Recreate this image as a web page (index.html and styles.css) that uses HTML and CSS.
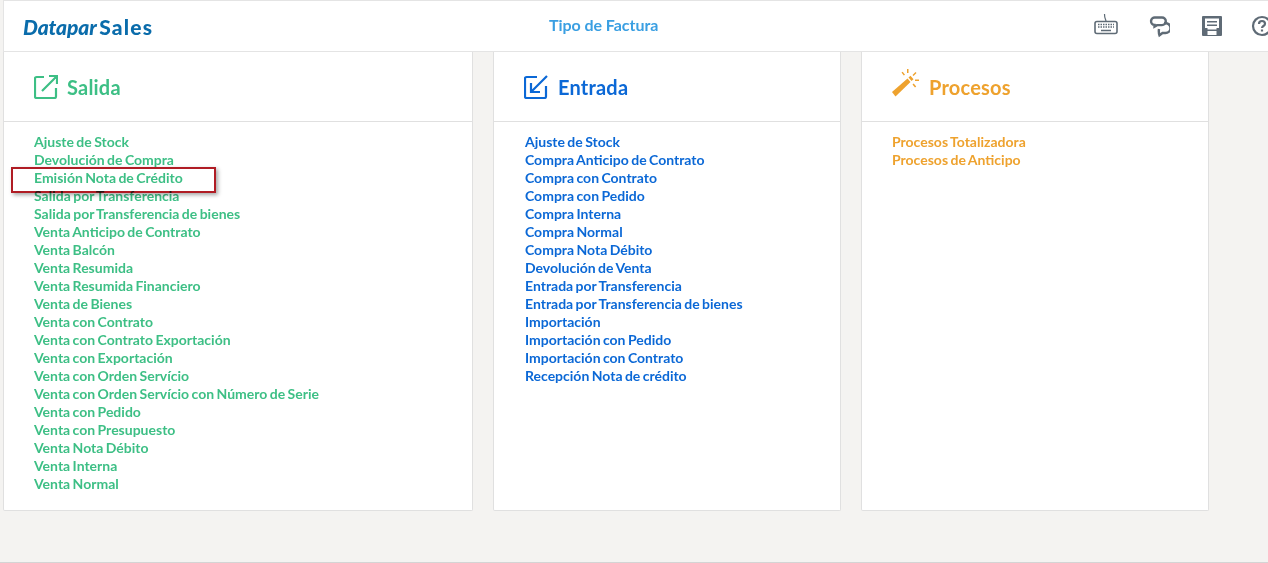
FILE: index.html
```html
<!DOCTYPE html>
<html>
<head>
    <title>Tipo de Factura</title>
    <link rel="stylesheet" href="styles.css">
</head>
<body>
    <div class="topbar">
        <div class="logo"><em>Datapar</em> <span>Sales</span></div>
        <div class="page-title">Tipo de Factura</div>
        <div class="tools">
            <svg class="tool" width="24" height="24" viewBox="0 0 24 24" fill="none" stroke="#5f6b76">
                <path d="M12 7.500C12 5 10.500 5 10.500 0" stroke-width="1.200"/>
                <rect x="1" y="7.500" width="22" height="12" rx="2" stroke-width="1.600"/>
                <path d="M4 10.500h16M4 13h16" stroke-width="1.500" stroke-dasharray="1.500 1"/>
                <path d="M7 16.500h10" stroke-width="1.500"/>
            </svg>
            <svg class="tool" width="24" height="24" viewBox="-2 0 24 24" fill="none" stroke="#5f6b76" stroke-width="2.400">
                <path d="M7 3.500h7a3.800 3.800 0 0 1 0 7.600H9l-2.500 1.500v-1.700A3.700 3.700 0 0 1 7 3.500z"/>
                <path d="M16 9c4 0 6.500 2 6.500 5s-2.500 5-5 5h-3l-3 2.300c-.5-1.500-1-3.500-.5-6.300"/>
            </svg>
            <svg class="tool" width="24" height="24" viewBox="-2 0 24 24">
                <rect fill="#5f6b76" x="2" y="2" width="20" height="20" rx="1"/>
                <path fill="#fff" d="M5 4.500h14V14h-2.500v7h-9v-7H5z"/>
                <path fill="#5f6b76" d="M7 7h10v1.500H7zM7 10.500h10V12H7zM5 15.500h14V17H5z"/>
            </svg>
            <svg class="tool" width="24" height="24" viewBox="0 0 24 24" fill="none" stroke="#5f6b76" stroke-width="2.200">
                <circle cx="12" cy="12" r="9"/>
                <path d="M9 10c0-2 1.300-3 3-3s3 1 3 2.700c0 2.300-3 2.300-3 4.300"/>
                <path d="M12 15.500v2"/>
            </svg>
        </div>
    </div>

    <div class="panels">
        <div class="panel salida">
            <div class="panel-head">
                <svg width="24" height="24" viewBox="0 0 24 24" fill="none" stroke="currentColor" stroke-width="2.200">
                    <path d="M10 2H2.500A1.500 1.500 0 0 0 1 3.500v18A1.500 1.500 0 0 0 2.500 23h18a1.500 1.500 0 0 0 1.500-1.500V13"/>
                    <path d="M8 16L23 1M15 1h8v8"/>
                </svg>
                <h2>Salida</h2>
            </div>
            <ul class="links">
                <li>Ajuste de Stock</li>
                <li>Devolución de Compra</li>
                <li>Emisión Nota de Crédito</li>
                <li>Salida por Transferencia</li>
                <li>Salida por Transferencia de bienes</li>
                <li>Venta Anticipo de Contrato</li>
                <li>Venta Balcón</li>
                <li>Venta Resumida</li>
                <li>Venta Resumida Financiero</li>
                <li>Venta de Bienes</li>
                <li>Venta con Contrato</li>
                <li>Venta con Contrato Exportación</li>
                <li>Venta con Exportación</li>
                <li>Venta con Orden Servício</li>
                <li>Venta con Orden Servício con Número de Serie</li>
                <li>Venta con Pedido</li>
                <li>Venta con Presupuesto</li>
                <li>Venta Nota Débito</li>
                <li>Venta Interna</li>
                <li>Venta Normal</li>
            </ul>
            <div class="highlight"></div>
        </div>

        <div class="panel entrada">
            <div class="panel-head">
                <svg width="24" height="24" viewBox="0 0 24 24" fill="none" stroke="currentColor" stroke-width="2.200">
                    <path d="M13 2H2.500A1.500 1.500 0 0 0 1 3.500v18A1.500 1.500 0 0 0 2.500 23h18a1.500 1.500 0 0 0 1.500-1.500V11"/>
                    <path d="M23 1L8 16M7 8v9h9"/>
                </svg>
                <h2>Entrada</h2>
            </div>
            <ul class="links">
                <li>Ajuste de Stock</li>
                <li>Compra Anticipo de Contrato</li>
                <li>Compra con Contrato</li>
                <li>Compra con Pedido</li>
                <li>Compra Interna</li>
                <li>Compra Normal</li>
                <li>Compra Nota Débito</li>
                <li>Devolución de Venta</li>
                <li>Entrada por Transferencia</li>
                <li>Entrada por Transferencia de bienes</li>
                <li>Importación</li>
                <li>Importación con Pedido</li>
                <li>Importación con Contrato</li>
                <li>Recepción Nota de crédito</li>
            </ul>
        </div>

        <div class="panel procesos">
            <div class="panel-head">
                <svg class="wand" width="27" height="28" viewBox="0 0 27 28" fill="currentColor">
                    <path d="M0 23L15.500 9.500l3 3.500L3.500 27.500z"/>
                    <path d="M16.500 8.500l2-1.800 3 3.500-2 1.800z"/>
                    <path d="M15 0h1.500v4H15zM9.500 3.500l1.200-.8 2.300 3-1.200.8zM23.500 3l1 1-3 3-1-1zM23 10.500h4V12h-4zM20.500 15.500l1.200-1 2.500 3-1.200 1z"/>
                </svg>
                <h2>Procesos</h2>
            </div>
            <ul class="links">
                <li>Procesos Totalizadora</li>
                <li>Procesos de Anticipo</li>
            </ul>
        </div>
    </div>
</body>
</html>
```

FILE: styles.css
```css
* {
    box-sizing: border-box;
}
html, body {
    height: 100%;
}
body {
    margin: 0;
    padding: 0 0 0 3px;
    overflow: hidden;
    background-color: #f4f3f1;
    border-bottom: 1px solid #d4d4d4;
    font-family: Lato, "Open Sans", sans-serif;
}
.topbar {
    position: relative;
    display: flex;
    justify-content: space-between;
    align-items: center;
    height: 52px;
    padding: 0 0 0 19px;
    background-color: #fff;
    border-top: 1px solid #e4e4e4;
    border-bottom: 1px solid #e4e4e4;
    border-left: 1px solid #e4e4e4;
    overflow: hidden;
}
.logo {
    font-size: 21px;
    font-weight: 900;
    color: #0a6cab;
    word-spacing: -2.500px;
}
.logo em {
    font-style: italic;
    letter-spacing: -0.1px;
}
.logo span {
    letter-spacing: 1.200px;
}
.page-title {
    position: absolute;
    left: 545px;
    top: 14px;
    font-size: 16px;
    font-weight: 700;
    letter-spacing: -0.05px;
    color: #3a9fe2;
}
.tools {
    display: flex;
    gap: 28px;
    margin-right: -6px;
}
.panels {
    display: flex;
    gap: 20px;
}
.panel {
    position: relative;
    height: 459px;
    background-color: #fff;
    border: 1px solid #e0e0e0;
    border-top: none;
    border-radius: 0 0 2px 2px;
}
.salida {
    width: 470px;
    color: #3dbf85;
}
.entrada {
    width: 348px;
    color: #0b68d6;
}
.procesos {
    width: 348px;
    color: #eea22e;
}
.panel-head {
    display: flex;
    align-items: center;
    gap: 9px;
    height: 70px;
    padding: 0 30px;
    border-bottom: 1px solid #e0e0e0;
}
.panel-head h2 {
    margin: 0;
    font-size: 20px;
    font-weight: 700;
    letter-spacing: 0.2px;
}
.entrada .panel-head {
    gap: 10px;
}
.procesos .panel-head {
    gap: 10px;
}
.wand {
    margin-bottom: 7px;
}
.links {
    list-style: none;
    margin: 0;
    padding: 11px 30px 0;
    font-size: 14px;
    font-weight: 700;
    line-height: 18px;
    word-spacing: -1px;
}
.entrada .links {
    padding-left: 31px;
}
.highlight {
    position: absolute;
    left: 7px;
    top: 115px;
    width: 205px;
    height: 26px;
    border: 2px solid #b01c24;
    background-color: #fff;
    box-shadow: 2px 2px 4px rgba(0, 0, 0, 0.35);
    mix-blend-mode: multiply;
}
```
